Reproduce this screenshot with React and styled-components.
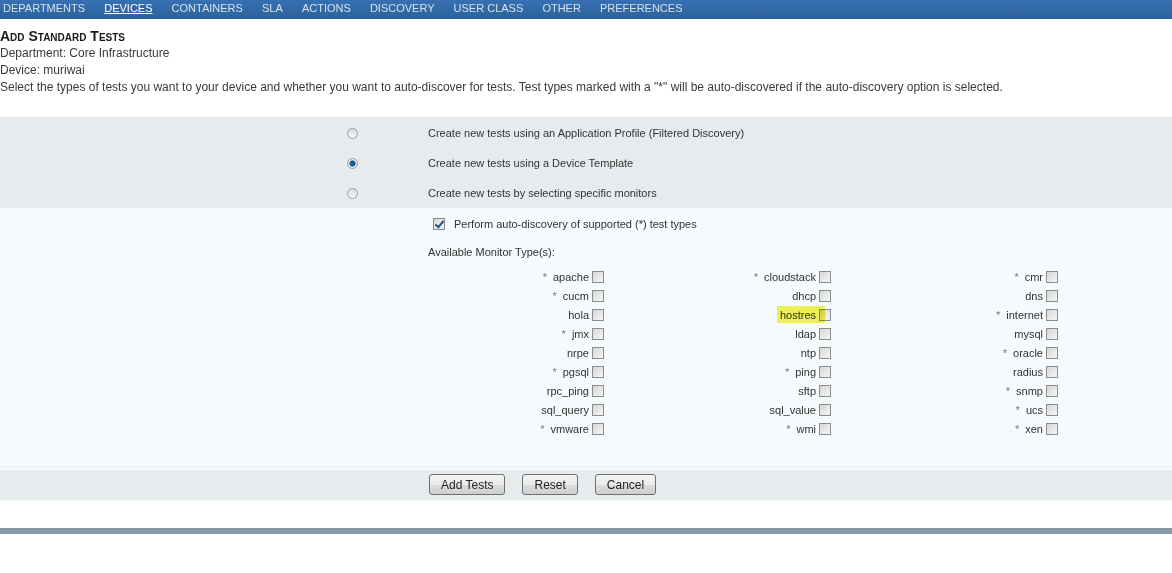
import React from 'react';
import styled, { createGlobalStyle } from 'styled-components';

const GlobalStyle = createGlobalStyle`
  body {
    margin: 0;
    background: #fff;
    font-family: "Liberation Sans", Arial, sans-serif;
    color: #333;
  }
`;

const navItems = ['DEPARTMENTS', 'DEVICES', 'CONTAINERS', 'SLA', 'ACTIONS', 'DISCOVERY', 'USER CLASS', 'OTHER', 'PREFERENCES'];

const monitors = [
  [['apache', true], ['cloudstack', true], ['cmr', true]],
  [['cucm', true], ['dhcp', false], ['dns', false]],
  [['hola', false], ['hostres', false, true], ['internet', true]],
  [['jmx', true], ['ldap', false], ['mysql', false]],
  [['nrpe', false], ['ntp', false], ['oracle', true]],
  [['pgsql', true], ['ping', true], ['radius', false]],
  [['rpc_ping', false], ['sftp', false], ['snmp', true]],
  [['sql_query', false], ['sql_value', false], ['ucs', true]],
  [['vmware', true], ['wmi', true], ['xen', true]],
];

const radios = [
  'Create new tests using an Application Profile (Filtered Discovery)',
  'Create new tests using a Device Template',
  'Create new tests by selecting specific monitors',
];

const App = () => {
  return (
    <Page>
      <GlobalStyle />
      <Nav>
        {navItems.map((n) => (
          <NavItem key={n} active={n === 'DEVICES'}>{n}</NavItem>
        ))}
      </Nav>

      <Header>
        <Title>Add Standard Tests</Title>
        <Line>Department: Core Infrastructure</Line>
        <Line>Device: muriwai</Line>
        <Line>
          Select the types of tests you want to your device and whether you want to auto-discover for tests. Test types marked with a "*" will be auto-discovered if the auto-discovery option is selected.
        </Line>
      </Header>

      <RadioBand>
        {radios.map((r, i) => (
          <RadioRow key={r}>
            <RadioCell>
              <Radio checked={i === 1} />
            </RadioCell>
            <RadioText>{r}</RadioText>
          </RadioRow>
        ))}
      </RadioBand>

      <MonitorBand>
        <AutoRow>
          <Check checked />
          <span>Perform auto-discovery of supported (*) test types</span>
        </AutoRow>
        <Available>Available Monitor Type(s):</Available>
        <Grid>
          {monitors.flat().map(([name, auto, marked]) => (
            <Cell key={name}>
              <Label marked={marked}>
                {auto && <Star>*</Star>}
                {name}
              </Label>
              <Check />
            </Cell>
          ))}
        </Grid>
      </MonitorBand>

      <Spacer />
      <ButtonBand>
        <Button>Add Tests</Button>
        <Button>Reset</Button>
        <Button>Cancel</Button>
      </ButtonBand>

      <Footer />
    </Page>
  );
};

export default App;

const Page = styled.div`
  width: 1172px;
  min-height: 573px;
  font-size: 12px;
`;

const Nav = styled.div`
  height: 19px;
  display: flex;
  align-items: center;
  padding-left: 3px;
  background: linear-gradient(#3770b3, #2c6399);
`;

const NavItem = styled.span`
  font-size: 11px;
  margin-right: 19.1px;
  color: ${(p) => (p.active ? '#ffffff' : '#d5e1ee')};
  text-decoration: ${(p) => (p.active ? 'underline' : 'none')};
  margin-top: -4px;
`;

const Header = styled.div`
  padding-top: 9px;
  padding-bottom: 21px;
`;

const Title = styled.div`
  font-weight: bold;
  font-variant: small-caps;
  font-size: 14px;
  line-height: 17px;
  color: #1a1a1a;
`;

const Line = styled.div`
  line-height: 17px;
  color: #3a3a3a;
`;

const RadioBand = styled.div`
  background: #e6ebee;
  border-top: 1px solid #dde3e7;
`;

const RadioRow = styled.div`
  display: grid;
  grid-template-columns: 428px 1fr;
  align-items: center;
  height: 30px;
  font-size: 11px;
`;

const RadioCell = styled.div`
  display: flex;
  justify-content: flex-end;
  padding-right: 70px;
`;

const Radio = styled.span`
  width: 11px;
  height: 11px;
  border-radius: 50%;
  box-sizing: border-box;
  border: 1px solid #9a9a9a;
  background: ${(p) =>
    p.checked
      ? 'radial-gradient(circle, #1d5f90 0 2.6px, #5c9ac4 3px, #e8eef2 3.6px)'
      : 'linear-gradient(#dcdcdc, #f7f7f7)'};
`;

const RadioText = styled.span`
  color: #333;
`;

const MonitorBand = styled.div`
  background: #f5fafd;
  padding: 7px 0 28px;
  border-bottom: 1px solid #e9eff2;
  font-size: 11px;
`;

const AutoRow = styled.div`
  display: flex;
  align-items: center;
  gap: 9px;
  height: 18px;
  padding-left: 433px;
`;

const Check = styled.span`
  width: 12px;
  height: 12px;
  box-sizing: border-box;
  border: 1px solid #8c8c8c;
  background: linear-gradient(135deg, #d6d6d6, #f6f6f6);
  position: relative;
  flex: none;
  &::after {
    content: ${(p) => (p.checked ? "''" : 'none')};
    position: absolute;
    left: 3px;
    top: 0px;
    width: 3px;
    height: 7px;
    border: solid #2b4f8a;
    border-width: 0 2px 2px 0;
    transform: rotate(40deg);
  }
`;

const Available = styled.div`
  padding-left: 428px;
  margin-top: 11px;
  line-height: 17px;
`;

const Grid = styled.div`
  display: grid;
  grid-template-columns: repeat(3, 227px);
  grid-auto-rows: 19px;
  margin-top: 6px;
  padding-left: 378px;
`;

const Cell = styled.div`
  display: flex;
  justify-content: flex-end;
  align-items: center;
  gap: 3px;
  padding-right: 1px;
`;

const Label = styled.span`
  position: relative;
  color: #333;
  &::after {
    content: ${(p) => (p.marked ? "''" : 'none')};
    position: absolute;
    left: -3px;
    right: -9px;
    top: -3px;
    bottom: -2px;
    background: #f4f43a;
    mix-blend-mode: multiply;
    opacity: 0.85;
    z-index: 1;
  }
`;

const Star = styled.span`
  color: #777;
  margin-right: 6px;
`;

const Spacer = styled.div`
  height: 3px;
  background: #f4f8fa;
`;

const ButtonBand = styled.div`
  background: #e6ebee;
  height: 29px;
  display: flex;
  align-items: center;
  gap: 17px;
  padding-left: 429px;
  border-bottom: 2px solid #eef2f4;
`;

const Button = styled.button`
  font-family: "Liberation Sans", Arial, sans-serif;
  font-size: 12px;
  color: #222;
  height: 21px;
  padding: 0 11px;
  border: 1px solid #707070;
  border-radius: 3px;
  background: linear-gradient(#f2f2f2, #ebebeb 50%, #dddddd 51%, #cfcfcf);
`;

const Footer = styled.div`
  margin-top: 27px;
  height: 6px;
  background: #869ba6;
`;
